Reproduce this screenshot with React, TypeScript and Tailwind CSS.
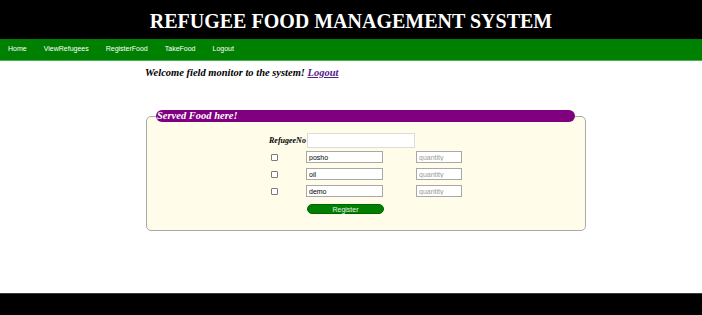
import React from "react";

const serif = { fontFamily: '"Liberation Serif", "Times New Roman", serif' };

function FoodRow({ name, mt }: { name: string; mt: string }) {
  return (
    <div className={`flex items-center ${mt}`}>
      <div className="w-[37px] flex">
        <input type="checkbox" className="ml-[2px] w-[7px] h-[7px] appearance-none border border-[#7a7a7a] bg-white rounded-[1px]" />
      </div>
      <input
        type="text"
        defaultValue={name}
        className="w-[77px] h-[12px] border border-[#a8a8a8] bg-white px-[2px] text-[7px] leading-none text-black outline-none"
        style={{ fontFamily: '"Liberation Sans", Arial, sans-serif' }}
      />
      <input
        type="text"
        placeholder="quantity"
        className="ml-[33px] w-[46px] h-[12px] border border-[#a8a8a8] bg-white px-[2px] text-[7px] leading-none placeholder:text-[#9a9a9a] outline-none"
        style={{ fontFamily: '"Liberation Sans", Arial, sans-serif' }}
      />
    </div>
  );
}

export default function App() {
  return (
    <div className="w-[702px] h-[315px] bg-white flex flex-col overflow-hidden">
      <header className="h-[39px] bg-black flex items-center justify-center">
        <h1 className="text-white font-bold text-[20px] leading-none mt-[2px]" style={serif}>
          REFUGEE FOOD MANAGEMENT SYSTEM
        </h1>
      </header>
      <nav
        className="h-[22px] bg-[#008000] border-b border-[#4caf50] flex items-center pl-[8px] gap-[17px] text-white text-[7px]"
        style={{ fontFamily: '"Liberation Sans", Arial, sans-serif' }}
      >
        <a>Home</a>
        <a>ViewRefugees</a>
        <a>RegisterFood</a>
        <a>TakeFood</a>
        <a>Logout</a>
      </nav>
      <main className="ml-[145px] w-[441px]">
        <p className="mt-[5px] text-[10.5px] leading-[13px] font-bold italic text-black" style={serif}>
          Welcome field monitor to the system!{" "}
          <a className="underline text-[#551a8b]">Logout</a>
        </p>
        <fieldset className="mt-[31px] ml-[1px] w-[440px] h-[121px] border border-[#a9a9a9] rounded-[5px] bg-[#fffdea] px-[9px]">
          <legend
            className="w-[419px] h-[12px] bg-[#800080] rounded-[6px] text-white font-bold italic text-[10.5px] leading-[12px] pl-[1px]"
            style={serif}
          >
            Served Food here!
          </legend>
          <div className="ml-[113px] mt-[11px] flex flex-col">
            <div className="flex items-center">
              <div className="w-[37px] text-[8px] font-bold italic text-black" style={serif}>
                RefugeeNo
              </div>
              <input type="text" className="ml-[1px] w-[108px] h-[15px] border border-[#dcdcdc] bg-white outline-none" />
            </div>
            <FoodRow name="posho" mt="mt-[3px]" />
            <FoodRow name="oil" mt="mt-[5px]" />
            <FoodRow name="demo" mt="mt-[5px]" />
            <div className="flex mt-[7px]">
              <button
                className="ml-[38px] w-[77px] h-[10px] rounded-full bg-[#008000] border border-[#006400] text-[#e0f0e0] text-[7px] leading-none flex items-center justify-center"
                style={{ fontFamily: '"Liberation Sans", Arial, sans-serif' }}
              >
                Register
              </button>
            </div>
          </div>
        </fieldset>
      </main>
      <footer className="mt-auto h-[22px] bg-black border-t border-[#3a3a3a]" />
    </div>
  );
}
